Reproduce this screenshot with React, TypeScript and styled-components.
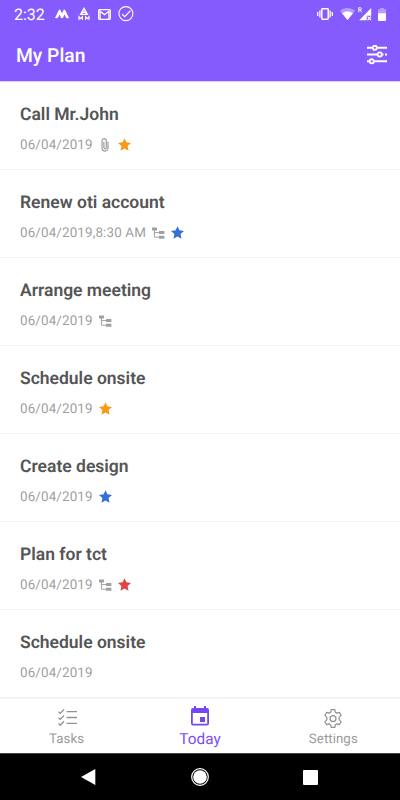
import React from "react";
import styled, { createGlobalStyle } from "styled-components";

const PURPLE = "#855bfe";

const GlobalStyle = createGlobalStyle`
  * { box-sizing: border-box; }
  body { margin: 0; background: #fff; font-family: Roboto, sans-serif; text-rendering: geometricPrecision; }
`;

const Screen = styled.div`
  width: 400px;
  height: 800px;
  display: flex;
  flex-direction: column;
  overflow: hidden;
  background: #fff;
`;

const StatusBar = styled.div`
  height: 28px;
  flex: none;
  display: flex;
  align-items: center;
  justify-content: space-between;
  padding: 0 14px 0 14px;
  background: ${PURPLE};
  color: #fff;
`;

const StatusGroup = styled.div`
  display: flex;
  align-items: center;
`;

const Clock = styled.span`
  font-size: 16px;
  line-height: 28px;
  width: 41px;
  padding-top: 1px;
`;

const Header = styled.header`
  height: 54px;
  flex: none;
  display: flex;
  align-items: center;
  justify-content: space-between;
  padding: 0 13px 0 16px;
  background: ${PURPLE};
  border-bottom: 1px solid #ddd1fd;
  color: #fff;
`;

const HeaderTitle = styled.h1`
  margin: 0;
  padding-top: 2px;
  font-size: 19.3px;
  font-weight: 500;
  line-height: 51px;
`;

const List = styled.main`
  flex: 1;
  min-height: 0;
  overflow: hidden;
`;

const Row = styled.article`
  height: 88px;
  padding: 21px 20px 0;
  border-bottom: 1px solid #f4f4f4;
`;

const TaskTitle = styled.h2`
  margin: 0;
  font-size: 17.5px;
  font-weight: 600;
  line-height: 24px;
  color: #555;
`;

const Meta = styled.div`
  display: flex;
  align-items: center;
  gap: 6px;
  height: 20px;
  margin-top: 8px;
`;

const DateText = styled.span`
  font-size: 13.4px;
  line-height: 20px;
  padding-top: 1px;
  letter-spacing: 0.14px;
  color: #9f9f9f;
`;

const Glyph = styled.svg<{ $w: number; $h: number; $left?: number }>`
  display: block;
  flex: none;
  width: ${(p) => p.$w}px;
  height: ${(p) => p.$h}px;
  margin-left: ${(p) => p.$left ?? 0}px;
`;

const TabBar = styled.nav`
  height: 56px;
  flex: none;
  display: grid;
  grid-template-columns: repeat(3, 1fr);
  border-top: 2px solid #f4f4f4;
  background: #fff;
`;

const Tab = styled.div<{ $active?: boolean }>`
  display: flex;
  flex-direction: column;
  align-items: center;
  padding-top: ${(p) => (p.$active ? 7 : 10)}px;
  color: ${(p) => (p.$active ? "#7c4cf5" : "#9b9b9b")};
`;

const TabIcon = styled.div`
  height: 20px;
  display: flex;
  align-items: flex-start;
`;

const TabLabel = styled.span<{ $active?: boolean }>`
  font-size: ${(p) => (p.$active ? 15.3 : 13.3)}px;
  letter-spacing: 0.05px;
  line-height: 20px;
  margin-top: ${(p) => (p.$active ? 3 : 1)}px;
`;

const SystemBar = styled.footer`
  height: 47px;
  flex: none;
  display: grid;
  grid-template-columns: 112px 112px 108px;
  padding-left: 32px;
  justify-items: center;
  align-items: center;
  border-top: 1px solid #444;
  background: #000;
`;

const MotoIcon = () => (
  <Glyph $w={14} $h={10} viewBox="0 0 14 10">
    <path d="M0 8.9 4 .7 5.2.5 7 4.2 8.8.5 10 .7l4 8.2-2.6.3-2-3.7L8 9H6L4.6 5.5l-2 3.7Z" fill="#fff" />
  </Glyph>
);

const AlertMmIcon = () => (
  <Glyph $w={12} $h={14} $left={9} viewBox="0 0 12 14">
    <path d="M6 0 10.5 8H1.5Z" fill="#fff" />
    <path d="M4.6 6.5h2.8M6 3.2v1.7" stroke={PURPLE} strokeWidth="0.8" />
    <path d="M1 13V9.7l1.7 2 1.7-2V13M7.6 13V9.7l1.7 2 1.7-2V13" fill="none" stroke="#fff" strokeWidth="1.1" />
  </Glyph>
);

const MailIcon = () => (
  <Glyph $w={13} $h={11} $left={8} viewBox="0 0 13 11">
    <rect x="0.65" y="0.65" width="11.7" height="9.7" rx="1" fill="none" stroke="#fff" strokeWidth="1.3" />
    <path d="M2.1 10V2.2L6.5 5.6l4.4-3.4V10" fill="none" stroke="#fff" strokeWidth="1.3" />
  </Glyph>
);

const CheckCircleIcon = () => (
  <Glyph $w={16} $h={16} $left={7} viewBox="0 0 16 16">
    <circle cx="7.9" cy="7.6" r="7" fill="none" stroke="#fff" strokeWidth="1.1" />
    <path d="m4 8.1 2.7 2.6 5.8-6" fill="none" stroke="#fff" strokeWidth="1.2" />
  </Glyph>
);

const VibrateIcon = () => (
  <Glyph $w={16} $h={12} viewBox="0 0 16 12">
    <rect x="4.8" y="0.8" width="6.4" height="10.4" rx="0.6" fill="none" stroke="#fff" strokeWidth="1.5" />
    <path d="M.7 4v4M2.9 2.6v6.8M13.1 2.6v6.8M15.3 4v4" stroke="#fff" strokeWidth="1.3" />
  </Glyph>
);

const WifiIcon = () => (
  <Glyph $w={15} $h={12} $left={7} viewBox="0 0 15 12">
    <path d="M7.5 12 0 2.7C4.5-.9 10.5-.9 15 2.7Z" fill="#fff" opacity=".4" />
    <path d="M7.5 12 2 5.2c3.3-2.4 7.7-2.4 11 0Z" fill="#fff" />
  </Glyph>
);

const SignalIcon = () => (
  <Glyph $w={14} $h={14} $left={3} viewBox="0 0 14 14">
    <path d="M13.2 1v7.8H8.7v4.4H1.2Z" fill="#fff" />
    <path d="M.8 5.2V.7h1.5c1.5 0 1.5 2.1 0 2.1H.8m1.4 0 1.4 2.4" fill="none" stroke="#fff" strokeWidth=".9" />
    <path d="m9.6 9.7 3.4 3.4m0-3.4-3.4 3.4" stroke="#fff" strokeWidth="1.2" />
  </Glyph>
);

const BatteryIcon = () => (
  <Glyph $w={8} $h={13} $left={6} viewBox="0 0 8 13">
    <path d="M0 1.3h2V0h4v1.3h2V6H0Z" fill="#fff" opacity=".4" />
    <path d="M0 5.3h8V12a1 1 0 0 1-1 1H1a1 1 0 0 1-1-1Z" fill="#fff" />
  </Glyph>
);

const FilterIcon = () => (
  <Glyph $w={20} $h={20} viewBox="0 0 20 20">
    <path d="M0 2.8h5M10.5 2.8H20M0 9.5h10M15.3 9.5h1.2M18 9.5h2M0 16.3h2M7.8 16.3H20" stroke="#fff" strokeWidth="1.9" />
    <g fill="none" stroke="#fff" strokeWidth="1.9">
      <circle cx="7.8" cy="2.8" r="2.1" />
      <circle cx="12.7" cy="9.5" r="2.1" />
      <circle cx="4.8" cy="16.3" r="2.1" />
    </g>
  </Glyph>
);

const ClipIcon = () => (
  <Glyph $w={8} $h={14} $left={2} viewBox="0 0 8 15">
    <path d="M7.2 4v6.8a3.2 3.2 0 0 1-6.4 0V3a2.2 2.2 0 0 1 4.6 0v7.3a1.3 1.3 0 0 1-2.6 0V4" fill="none" stroke="#989898" strokeWidth="1.2" />
  </Glyph>
);

const TreeIcon = () => (
  <Glyph $w={13} $h={13} viewBox="0 0 13 13">
    <path d="M0 .5h5v3H0ZM7 4.1h5.4v3H7ZM7 8.7h5.4v3H7Z" fill="#a0a0a0" />
    <path d="M2.4 3v7.2H7M2.4 5.6H7" fill="none" stroke="#a0a0a0" strokeWidth="1" />
  </Glyph>
);

const StarIcon = ({ color, afterClip }: { color: string; afterClip?: boolean }) => (
  <Glyph $w={13} $h={14} $left={afterClip ? 3 : 0.5} viewBox="0 0 13 14">
    <path d="m6.5.3 1.9 4 4.6.6-3.4 3.1.9 4.7-4-2.3-4 2.3.9-4.7L0 4.9l4.6-.6Z" fill={color} />
  </Glyph>
);

const TasksIcon = () => (
  <Glyph $w={20} $h={17} $left={2} viewBox="0 0 20 17">
    <g fill="none" stroke="#949494" strokeWidth="1.35">
      <path d="M8.5 2.6H19M8.5 8.5H19M8.5 14.3H19" />
      <path d="m.5 2.8 1.8 1.6L6 .5M.5 8.8l1.8 1.6L6 6.5M.5 14.6l1.8 1.6L6 12.3" />
    </g>
  </Glyph>
);

const CalendarIcon = () => (
  <Glyph $w={18} $h={20} viewBox="0 0 18 20">
    <path d="M3 0h2v2h8V0h2v2h1a2 2 0 0 1 2 2v13.5a2 2 0 0 1-2 2H2a2 2 0 0 1-2-2V4a2 2 0 0 1 2-2h1ZM1.8 7v10.7h14.4V7Z" fill="#7446f4" fillRule="evenodd" />
    <path d="M9 11h5v5H9Z" fill="#7446f4" />
  </Glyph>
);

const GearIcon = () => (
  <Glyph $w={20} $h={19} viewBox="0 0 20 19">
    <g fill="none" stroke="#929292" strokeWidth="1.25" strokeLinejoin="round">
      <path d="M8.2.7h3.6l.5 2.5 1.6.9 2.4-.8 1.8 3.1-1.9 1.7v2.8l1.9 1.7-1.8 3.1-2.4-.8-1.6.9-.5 2.5H8.2l-.5-2.5-1.6-.9-2.4.8-1.8-3.1 1.9-1.7V8.1L1.9 6.4l1.8-3.1 2.4.8 1.6-.9Z" />
      <circle cx="10" cy="9.5" r="3" />
    </g>
  </Glyph>
);

type Task = { title: string; date: string; clip?: boolean; tree?: boolean; star?: string };

const ORANGE = "#f79a18";
const BLUE = "#366fd9";
const RED = "#df4545";

const tasks: Task[] = [
  { title: "Call Mr.John", date: "06/04/2019", clip: true, star: ORANGE },
  { title: "Renew oti account", date: "06/04/2019,8:30 AM", tree: true, star: BLUE },
  { title: "Arrange meeting", date: "06/04/2019", tree: true },
  { title: "Schedule onsite", date: "06/04/2019", star: ORANGE },
  { title: "Create design", date: "06/04/2019", star: BLUE },
  { title: "Plan for tct", date: "06/04/2019", tree: true, star: RED },
  { title: "Schedule onsite", date: "06/04/2019" },
];

export default function App() {
  return (
    <>
      <GlobalStyle />
      <Screen>
        <StatusBar>
          <StatusGroup>
            <Clock>2:32</Clock>
            <MotoIcon />
            <AlertMmIcon />
            <MailIcon />
            <CheckCircleIcon />
          </StatusGroup>
          <StatusGroup>
            <VibrateIcon />
            <WifiIcon />
            <SignalIcon />
            <BatteryIcon />
          </StatusGroup>
        </StatusBar>
        <Header>
          <HeaderTitle>My Plan</HeaderTitle>
          <FilterIcon />
        </Header>
        <List>
          {tasks.map((task, i) => (
            <Row key={i}>
              <TaskTitle>{task.title}</TaskTitle>
              <Meta>
                <DateText>{task.date}</DateText>
                {task.clip && <ClipIcon />}
                {task.tree && <TreeIcon />}
                {task.star && <StarIcon color={task.star} afterClip={task.clip} />}
              </Meta>
            </Row>
          ))}
        </List>
        <TabBar>
          <Tab>
            <TabIcon><TasksIcon /></TabIcon>
            <TabLabel>Tasks</TabLabel>
          </Tab>
          <Tab $active>
            <TabIcon><CalendarIcon /></TabIcon>
            <TabLabel $active>Today</TabLabel>
          </Tab>
          <Tab>
            <TabIcon><GearIcon /></TabIcon>
            <TabLabel>Settings</TabLabel>
          </Tab>
        </TabBar>
        <SystemBar>
          <Glyph $w={15} $h={16} viewBox="0 0 15 16">
            <path d="M14.3 0v16L0 8Z" fill="#fff" />
          </Glyph>
          <Glyph $w={18} $h={18} viewBox="0 0 18 18">
            <circle cx="9" cy="9" r="8.3" fill="none" stroke="#fff" strokeWidth="1.2" />
            <circle cx="9" cy="9" r="6.8" fill="#fff" />
          </Glyph>
          <Glyph $w={15} $h={15} viewBox="0 0 15 15">
            <rect width="15" height="15" rx="1" fill="#fff" />
          </Glyph>
        </SystemBar>
      </Screen>
    </>
  );
}
